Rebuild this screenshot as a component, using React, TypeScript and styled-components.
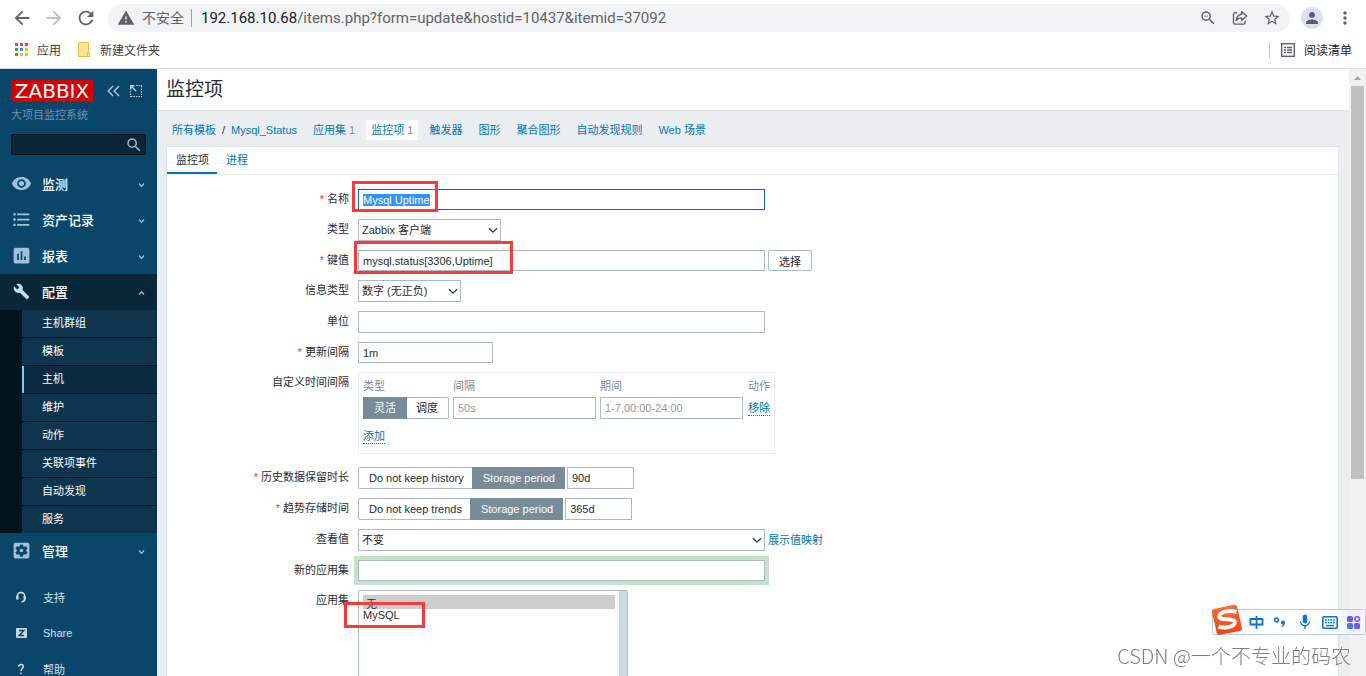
import React, { useEffect, useRef } from 'react';
import styled, { createGlobalStyle, css } from 'styled-components';
import {
  MdArrowBack, MdArrowForward, MdRefresh, MdWarning, MdZoomOut, MdStarBorder, MdMoreVert, MdPerson,
  MdVisibility, MdFormatListBulleted, MdAssessment, MdBuild, MdSettingsApplications, MdSearch, MdMic,
} from 'react-icons/md';

const c = {
  text: '#1f2c33',
  link: '#0275b8',
  border: '#acbbc2',
  soft: '#dfe4e7',
  page: '#ebeef0',
  muted: '#768d99',
  side: '#0a466a',
  sideDark: '#0a2737',
  sideIcon: '#9fc2da',
  chrome: '#5f6368',
  mark: '#fa3a3a',
};

const Global = createGlobalStyle`
  *, *::before, *::after { box-sizing: border-box; }
  body { margin: 0; overflow: hidden; background: #fff; }
  body, input, button, select {
    font-family: "Liberation Sans", "Noto Sans CJK SC", sans-serif;
    font-size: 11px;
    color: ${c.text};
  }
  a { color: ${c.link}; text-decoration: none; }
  svg { display: block; flex: none; }
`;

/* ---------- browser frame ---------- */

const Shell = styled.div`
  display: flex;
  flex-direction: column;
  height: 100vh;
  overflow: hidden;
`;

const BrowserTop = styled.header`
  flex: none;
  border-bottom: 1px solid #dadce0;
  color: ${c.chrome};
`;

const ToolRow = styled.div`
  display: flex;
  align-items: center;
  height: 36px;
  padding: 0 10px 0 6px;
`;

const IconButton = styled.button<{ $dim?: boolean; $w?: number }>`
  display: flex;
  align-items: center;
  justify-content: center;
  flex: none;
  width: ${(p) => p.$w ?? 32}px;
  height: 28px;
  padding: 0;
  border: 0;
  background: none;
  color: ${(p) => (p.$dim ? '#bdbfc2' : c.chrome)};
`;

const AddressBar = styled.div`
  display: flex;
  align-items: center;
  flex: 1;
  height: 28px;
  margin-left: 6px;
  padding: 0 2px 0 9px;
  border-radius: 14px;
  background: #f1f3f4;
`;

const Insecure = styled.span`
  display: flex;
  align-items: center;
  gap: 7px;
  padding-right: 7px;
  border-right: 1px solid #9aa0a6;
  font-size: 14px;
  line-height: 16px;
`;

const Url = styled.div`
  flex: 1;
  padding-left: 9px;
  font-family: Roboto, "Noto Sans", sans-serif;
  font-size: 15px;
  b { font-weight: 400; color: #202124; }
`;

const Avatar = styled.span`
  display: flex;
  align-items: center;
  justify-content: center;
  width: 22px;
  height: 22px;
  border-radius: 50%;
  background: #dee1e6;
  color: #4f5d75;
`;

const Bookmarks = styled.nav`
  display: flex;
  align-items: center;
  height: 32px;
  padding: 0 14px 5px 15px;
  font-size: 12px;
`;

const Bookmark = styled.a<{ $end?: boolean }>`
  display: flex;
  align-items: center;
  gap: 9px;
  height: 16px;
  margin-right: 17px;
  color: #3c4043;
  ${(p) => p.$end && css`
    margin: 0 0 0 auto;
    padding-left: 11px;
    border-left: 1px solid #c4c7cb;
    color: #202124;
  `}
`;

/* ---------- sidebar ---------- */

const Work = styled.div`
  display: flex;
  flex: 1;
  min-height: 0;
`;

const Sidebar = styled.aside`
  flex: none;
  width: 157px;
  overflow: hidden;
  background: ${c.side};
  color: #fff;
`;

const Brand = styled.div`
  display: flex;
  align-items: center;
  gap: 10px;
  padding: 11px 0 0 11px;
`;

const Logo = styled.a`
  flex: none;
  width: 82px;
  height: 22px;
  margin-right: 4px;
  background: #d40000;
  color: #fff;
  font: 20px/22px "DejaVu Sans", sans-serif;
  text-align: center;
`;

const Collapse = styled.button`
  display: flex;
  padding: 0;
  border: 0;
  background: none;
  color: #b4cddf;
`;

const Server = styled.div`
  padding: 5px 11px 0;
  line-height: 16px;
  color: #6e94ad;
`;

const SearchBox = styled.form`
  display: flex;
  align-items: center;
  height: 21px;
  margin: 11px 11px;
  padding-right: 2px;
  border: 1px solid #020d14;
  border-radius: 2px;
  background: #0a2737;
  input { flex: 1; min-width: 0; border: 0; background: none; color: #fff; outline: 0; }
  button { display: flex; padding: 0; border: 0; background: none; color: #9fb9c9; }
`;

const MenuItem = styled.a<{ $open?: boolean }>`
  display: flex;
  align-items: center;
  height: 36px;
  padding: 0 11px 2px;
  background: ${(p) => (p.$open ? c.sideDark : 'transparent')};
  color: #fff;
  font-size: 13px;
  font-weight: 500;
  > svg { margin: 3px 0 0 auto; color: #a9c4d6; }
`;

const MenuIcon = styled.span<{ $open?: boolean }>`
  display: flex;
  justify-content: center;
  width: 21px;
  margin-right: 10px;
  color: ${(p) => (p.$open ? '#c3dcee' : c.sideIcon)};
`;

const SubMenu = styled.div`
  display: grid;
  row-gap: 1px;
  padding-left: 22px;
  background: #03141d;
`;

const SubItem = styled.a<{ $on?: boolean }>`
  height: 27px;
  padding-left: 18px;
  border-left: 2px solid ${(p) => (p.$on ? '#7fc8f8' : '#0f344e')};
  background: ${(p) => (p.$on ? '#0a2b3f' : '#0f344e')};
  color: #fff;
  line-height: 26px;
`;

const Extras = styled.div`
  padding-top: 10px;
`;

const ExtraItem = styled.a`
  display: flex;
  align-items: center;
  gap: 16px;
  height: 36px;
  padding-left: 15px;
  color: #d3e2ec;
`;

/* ---------- content ---------- */

const Content = styled.main`
  display: flex;
  flex-direction: column;
  flex: 1;
  min-width: 0;
  overflow: hidden;
  background: ${c.page};
`;

const Title = styled.h1`
  flex: none;
  height: 42px;
  margin: 0;
  padding-left: 9px;
  border-bottom: 1px solid ${c.soft};
  background: #fff;
  font-size: 19px;
  font-weight: 400;
  line-height: 41px;
`;

const Crumbs = styled.nav`
  display: flex;
  align-items: center;
  flex: none;
  gap: 6px;
  height: 35px;
  padding: 2px 10px 0;
  span { color: ${c.muted}; }
`;

const Crumb = styled.a<{ $on?: boolean }>`
  height: 20px;
  padding: 0 5px;
  line-height: 20px;
  background: ${(p) => (p.$on ? '#fff' : 'transparent')};
`;

const CrumbPath = styled.div`
  display: flex;
  align-items: center;
  i { width: 5px; font-style: normal; text-align: center; }
`;

const Panel = styled.section`
  flex: 1 0 auto;
  margin: 0 10px 0 9px;
  border: 1px solid ${c.soft};
  background: #fff;
`;

const Tabs = styled.nav`
  display: flex;
  height: 28px;
  border-bottom: 1px solid ${c.page};
`;

const Tab = styled.a<{ $on?: boolean }>`
  height: 27px;
  padding: 0 8px 0 9px;
  border-bottom: ${(p) => (p.$on ? `2px solid ${c.link}` : '0')};
  color: ${(p) => (p.$on ? c.text : c.link)};
  line-height: 26px;
`;

const Form = styled.form`
  display: grid;
  row-gap: 9px;
  padding-top: 14px;
`;

const Row = styled.div<{ $gapAfter?: boolean }>`
  display: grid;
  grid-template-columns: 182px 1fr;
  column-gap: 9px;
  margin-bottom: ${(p) => (p.$gapAfter ? 4 : 0)}px;
`;

const Label = styled.label<{ $required?: boolean }>`
  text-align: right;
  line-height: 20px;
  &::before { content: ${(p) => (p.$required ? '"* "' : 'none')}; color: #e33734; }
`;

const Field = styled.div<{ $gap?: number }>`
  position: relative;
  display: flex;
  align-items: flex-start;
  gap: ${(p) => p.$gap ?? 3}px;
`;

const TextBox = styled.input<{ $w: number; $tall?: boolean; $focus?: boolean; $glow?: boolean }>`
  width: ${(p) => p.$w}px;
  height: ${(p) => (p.$tall ? 22 : 21)}px;
  padding: 0 4px;
  border: 1px solid ${(p) => (p.$focus ? '#0a6aa3' : c.border)};
  border-radius: 0;
  outline: 0;
  background: #fff;
  box-shadow: ${(p) => (p.$glow ? '0 0 0 4px #c5e3c8' : 'none')};
  &::placeholder { color: #999; opacity: 1; }
  &::selection { background: #3390ff; color: #fff; }
`;

const SelectWrap = styled.div<{ $w: number }>`
  position: relative;
  width: ${(p) => p.$w}px;
  select {
    appearance: none;
    display: block;
    width: 100%;
    height: 22px;
    padding: 0 20px 0 3px;
    border: 1px solid ${c.border};
    border-radius: 0;
    background: #fff;
  }
  svg { position: absolute; top: 8px; right: 3px; pointer-events: none; }
`;

const PlainButton = styled.button`
  width: 44px;
  height: 21px;
  padding: 0;
  border: 1px solid ${c.border};
  border-radius: 2px;
  background: #fff;
`;

const Segments = styled.div`
  display: inline-flex;
  height: 22px;
  border: 1px solid ${c.border};
  border-radius: 2px;
`;

const Segment = styled.label`
  position: relative;
  min-width: 42px;
  padding: 0 9px 0 10px;
  line-height: 20px;
  white-space: nowrap;
  &:has(input:checked) {
    min-width: 44px;
    margin: -1px;
    padding: 1px 10px 1px 11px;
    background: ${c.muted};
    color: #fff;
  }
  input { position: absolute; inset: 0; margin: 0; opacity: 0; }
`;

const IntervalBox = styled.div`
  width: 417px;
  padding: 3px 4px 0;
  border: 1px solid ${c.page};
`;

const IntervalTable = styled.table`
  border-collapse: collapse;
  table-layout: fixed;
  width: 100%;
  th { height: 18px; padding: 0; color: ${c.muted}; font-weight: 400; text-align: left; }
  td { padding: 3px 0 0; vertical-align: middle; height: 25px; }
  tfoot td { height: 34px; padding: 0; }
`;

const DottedButton = styled.button`
  padding: 0;
  border: 0;
  border-bottom: 1px dotted ${c.link};
  background: none;
  color: ${c.link};
  line-height: 14px;
`;

const SideLink = styled.a`
  line-height: 22px;
`;

const ListFrame = styled.div`
  display: flex;
  width: 270px;
  height: 102px;
  border: 1px solid ${c.border};
  border-radius: 2px;
  select {
    flex: 1;
    height: 100%;
    padding: 4px;
    border: 0;
    outline: 0;
    overflow: hidden;
    background: #fff;
  }
  option { height: 14px; min-height: 14px; padding: 0; line-height: 14px; color: ${c.text}; }
`;

const ListTrack = styled.div`
  width: 8px;
  background: #d0d9de;
`;

/* Hand-drawn highlight frames laid over the fields */
const Mark = styled.span<{ $x: number; $y: number; $w: number; $h: number }>`
  position: absolute;
  left: ${(p) => p.$x}px;
  top: ${(p) => p.$y}px;
  width: ${(p) => p.$w}px;
  height: ${(p) => p.$h}px;
  border: 3px solid ${c.mark};
  pointer-events: none;
`;

const ScrollBar = styled.div`
  display: flex;
  flex-direction: column;
  align-items: center;
  flex: none;
  width: 17px;
  background: #f1f1f1;
  svg { margin: 6px 0; }
  &::after { content: ''; flex: 1; }
`;

const Thumb = styled.div`
  flex: 2;
  width: 13px;
  background: #c1c1c1;
`;

/* ---------- overlays ---------- */

const ImeBar = styled.div`
  position: fixed;
  right: 0;
  bottom: 41px;
  display: flex;
  align-items: center;
  gap: 8px;
  height: 26px;
  padding: 0 4px 0 36px;
  border: 1px solid #b4cde8;
  border-radius: 2px;
  background: linear-gradient(to right, #fff 84%, #e2f8fb 88%, #f8e6f6 96%, #fff);
  color: #0a6fd8;
  > svg:first-child { position: absolute; left: -2px; top: -6px; }
`;

const Watermark = styled.div`
  position: fixed;
  right: 15px;
  bottom: 5px;
  font: 300 20px/30px "Noto Sans CJK SC", sans-serif;
  color: #808080;
  text-shadow: -1px -1px 0 #fff;
  white-space: nowrap;
`;

/* ---------- drawings ---------- */

const AppsIcon = () => (
  <svg width="13" height="13" viewBox="0 0 13 13">
    {['#ea4335', '#ea4335', '#ea4335', '#34a853', '#4285f4', '#fbbc05', '#34a853', '#fbbc05', '#fbbc05'].map((f, i) => (
      <rect key={i} x={(i % 3) * 5} y={Math.floor(i / 3) * 5} width="3" height="3" fill={f} />
    ))}
  </svg>
);

const FolderIcon = () => (
  <svg width="13" height="15" viewBox="0 0 13 15">
    <path d="M.5.5h10v10h1v4H.5z" fill="#ffe694" stroke="#e8c14d" />
    <path d="M9.5 10.5h2v4h-2z" fill="#ffe694" stroke="#e8c14d" />
  </svg>
);

const ShareIcon = () => (
  <svg width="16" height="16" viewBox="0 0 16 16" fill="none" stroke="currentColor" strokeWidth="1.4" strokeLinejoin="round">
    <path d="M5 2.7H3.2A1.7 1.7 0 0 0 1.500 4.400v8A1.700 1.700 0 0 0 3.200 14.100h8.300a1.700 1.700 0 0 0 1.700-1.700V11" />
    <path d="M9.600 1.600 14.600 6 9.600 10.400V7.900C7 7.900 5.400 8.700 4.200 10.500 4.600 7.400 6.300 4.700 9.600 4.200z" />
  </svg>
);

const ReadingIcon = () => (
  <svg width="14" height="14" viewBox="0 0 14 14" fill="none" stroke={c.chrome}>
    <rect x="0.700" y="0.700" width="12.600" height="12.600" strokeWidth="1.400" />
    <path d="M3 4.500h2M6 4.500h5M3 7h2M6 7h5M3 9.500h2M6 9.500h5" strokeWidth="1.300" />
  </svg>
);

const CollapseIcon = () => (
  <svg width="13" height="12" viewBox="0 0 13 12" fill="none" stroke="currentColor" strokeWidth="1.300">
    <path d="M6 1 1.200 6 6 11M12 1 7.200 6 12 11" />
  </svg>
);

const KioskIcon = () => (
  <svg width="12" height="12" viewBox="0 0 12 12" fill="none" stroke="currentColor">
    <path d="M6 .5h6M11.500 1v11M.5 6v6M1 11.500h11" strokeDasharray="1.500 1" />
    <path d="M1 1l5 5M.7 4.500V.7h3.800" strokeWidth="1.400" />
  </svg>
);

const Caret = ({ up }: { up?: boolean }) => (
  <svg width="9" height="6" viewBox="0 0 9 6" fill="none" stroke="currentColor" strokeWidth="1.200">
    <path d={up ? 'M2 4.500 4.500 1.800 7 4.500' : 'M2 1.500 4.500 4.300 7 1.500'} />
  </svg>
);

const SelectArrow = () => (
  <svg width="10" height="7" viewBox="0 0 10 7" fill="none" stroke="#333" strokeWidth="1.300">
    <path d="M1 1.200 5 5.200 9 1.200" />
  </svg>
);

const SupportIcon = () => (
  <svg width="12" height="12" viewBox="0 0 12 12" fill="none" stroke="currentColor" strokeWidth="1.500">
    <path d="M2.300 8V5.200A3.700 3.700 0 0 1 9.700 5.200V8.500Q9.700 10.500 6.500 10.700" />
    <path d="M2.400 5v3.500M9.600 5v3.500" strokeWidth="2.200" />
  </svg>
);

const ShareZIcon = () => (
  <svg width="12" height="10" viewBox="0 0 12 10">
    <rect x="1" width="11" height="10" rx="1" fill="#c6d7e3" />
    <path d="M4 2.500h4.800L4.300 7.500H9" fill="none" stroke={c.side} strokeWidth="1.500" />
  </svg>
);

const HelpIcon = () => (
  <svg width="12" height="12" viewBox="0 0 12 12" fill="none" stroke="currentColor" strokeWidth="1.500">
    <path d="M3.700 3.700Q3.800 1.500 6 1.500T8.300 3.600C8.300 5.200 6 5.300 6 8M6 9.500v1.500" />
  </svg>
);

const SogouIcon = () => (
  <svg width="32" height="31" viewBox="0 0 32 31">
    <defs>
      <linearGradient id="sogou" x1="0" y1="0" x2="0" y2="1">
        <stop offset="0" stopColor="#ff6f37" />
        <stop offset="1" stopColor="#ee4310" />
      </linearGradient>
    </defs>
    <path d="M3 5 23 .7q2.500-.4 3.200 2L31 24q.4 2.400-2 3L8.500 30.700q-2.200.3-2.800-2L1 8.500Q.7 5.600 3 5z" fill="url(#sogou)" />
    <path d="M25.500 8C19 6 8 7.500 8.300 12.700 8.500 17 23.500 13.500 23.800 18.200 24 23.200 13 24.500 7.500 22.500" fill="none" stroke="#fff" strokeWidth="4" />
  </svg>
);

const PunctIcon = () => (
  <svg width="16" height="14" viewBox="0 0 16 14">
    <circle cx="4.500" cy="5" r="1.900" fill="none" stroke="currentColor" strokeWidth="1.500" />
    <path d="M9 7.500a2 2 0 1 1 3.800 1Q12.300 11 9.800 12.300L9.500 11.600Q10.800 10.800 10.800 9.600 9.300 9.300 9 7.500z" fill="currentColor" />
  </svg>
);

const ZhongIcon = () => (
  <svg width="15" height="15" viewBox="0 0 15 15" fill="none" stroke="currentColor" strokeWidth="1.800">
    <path d="M1.500 4h12v5.500h-12zM7.500 1v13" />
  </svg>
);

const KeyboardIcon = () => (
  <svg width="16" height="13" viewBox="0 0 16 13">
    <rect x="0.800" y="0.800" width="14.400" height="11.400" rx="1" fill="none" stroke="currentColor" strokeWidth="1.600" />
    <path d="M3 4h10M3 6.700h10" stroke="currentColor" strokeWidth="1.700" strokeDasharray="1.700 1" />
    <path d="M4 9.600h8" stroke="currentColor" strokeWidth="1.400" />
  </svg>
);

const GridIcon = () => (
  <svg width="15" height="15" viewBox="0 0 15 15">
    <rect x="1" y="1" width="6" height="6" rx="1.500" fill="#8358d8" />
    <circle cx="11.200" cy="4" r="2.300" fill="none" stroke="#5b6cf0" strokeWidth="1.600" />
    <rect x="1" y="8" width="6" height="6" rx="1.500" fill="#5b6cf0" />
    <rect x="8" y="8" width="6" height="6" rx="1.500" fill="#6a5fe0" />
  </svg>
);

/* ---------- page ---------- */

const subItems = ['主机群组', '模板', '主机', '维护', '动作', '关联项事件', '自动发现', '服务'];

const SelectBox = ({ id, w, value }: { id: string; w: number; value: string }) => (
  <SelectWrap $w={w}>
    <select id={id} defaultValue={value}><option>{value}</option></select>
    <SelectArrow />
  </SelectWrap>
);

const Choice = ({ name, options, active }: { name: string; options: string[]; active: number }) => (
  <Segments role="radiogroup">
    {options.map((o, i) => (
      <Segment key={o}>
        <input type="radio" name={name} defaultChecked={i === active} />
        {o}
      </Segment>
    ))}
  </Segments>
);

export default function App() {
  const nameRef = useRef<HTMLInputElement>(null);
  useEffect(() => {
    nameRef.current?.focus();
    nameRef.current?.select();
  }, []);

  return (
    <Shell>
      <Global />
      <BrowserTop>
        <ToolRow>
          <IconButton aria-label="后退"><MdArrowBack size={22} /></IconButton>
          <IconButton aria-label="前进" $dim><MdArrowForward size={22} /></IconButton>
          <IconButton aria-label="刷新"><MdRefresh size={22} /></IconButton>
          <AddressBar>
            <Insecure><MdWarning size={18} />不安全</Insecure>
            <Url><b>192.168.10.68</b>/items.php?form=update&amp;hostid=10437&amp;itemid=37092</Url>
            <IconButton aria-label="缩放"><MdZoomOut size={18} /></IconButton>
            <IconButton aria-label="分享"><ShareIcon /></IconButton>
            <IconButton aria-label="收藏"><MdStarBorder size={18} /></IconButton>
          </AddressBar>
          <IconButton aria-label="用户" $w={44}><Avatar><MdPerson size={18} /></Avatar></IconButton>
          <IconButton aria-label="菜单" $w={22}><MdMoreVert size={20} /></IconButton>
        </ToolRow>
        <Bookmarks>
          <Bookmark href="#"><AppsIcon />应用</Bookmark>
          <Bookmark href="#"><FolderIcon />新建文件夹</Bookmark>
          <Bookmark href="#" $end><ReadingIcon />阅读清单</Bookmark>
        </Bookmarks>
      </BrowserTop>

      <Work>
        <Sidebar>
          <Brand>
            <Logo href="#">ZABBIX</Logo>
            <Collapse aria-label="收起"><CollapseIcon /></Collapse>
            <Collapse aria-label="全屏"><KioskIcon /></Collapse>
          </Brand>
          <Server>大项目监控系统</Server>
          <SearchBox>
            <input aria-label="搜索" />
            <button type="button" aria-label="搜索"><MdSearch size={18} /></button>
          </SearchBox>
          <MenuItem href="#"><MenuIcon><MdVisibility size={21} /></MenuIcon>监测<Caret /></MenuItem>
          <MenuItem href="#"><MenuIcon><MdFormatListBulleted size={21} /></MenuIcon>资产记录<Caret /></MenuItem>
          <MenuItem href="#"><MenuIcon><MdAssessment size={21} /></MenuIcon>报表<Caret /></MenuItem>
          <MenuItem href="#" $open><MenuIcon $open><MdBuild size={17} /></MenuIcon>配置<Caret up /></MenuItem>
          <SubMenu>
            {subItems.map((s) => <SubItem key={s} href="#" $on={s === '主机'}>{s}</SubItem>)}
          </SubMenu>
          <MenuItem href="#"><MenuIcon><MdSettingsApplications size={21} /></MenuIcon>管理<Caret /></MenuItem>
          <Extras>
            <ExtraItem href="#"><SupportIcon />支持</ExtraItem>
            <ExtraItem href="#"><ShareZIcon />Share</ExtraItem>
            <ExtraItem href="#"><HelpIcon />帮助</ExtraItem>
          </Extras>
        </Sidebar>

        <Content>
          <Title>监控项</Title>
          <Crumbs>
            <CrumbPath>
              <Crumb href="#">所有模板</Crumb><i>/</i><Crumb href="#">Mysql_Status</Crumb>
            </CrumbPath>
            <Crumb href="#">应用集 <span>1</span></Crumb>
            <Crumb href="#" $on>监控项 <span>1</span></Crumb>
            <Crumb href="#">触发器</Crumb>
            <Crumb href="#">图形</Crumb>
            <Crumb href="#">聚合图形</Crumb>
            <Crumb href="#">自动发现规则</Crumb>
            <Crumb href="#">Web 场景</Crumb>
          </Crumbs>
          <Panel>
            <Tabs>
              <Tab href="#" $on>监控项</Tab>
              <Tab href="#">进程</Tab>
            </Tabs>
            <Form>
              <Row>
                <Label htmlFor="name" $required>名称</Label>
                <Field>
                  <TextBox id="name" ref={nameRef} $w={407} $focus defaultValue="Mysql Uptime" />
                  <Mark $x={-6} $y={-8} $w={86} $h={31} />
                </Field>
              </Row>
              <Row>
                <Label htmlFor="type">类型</Label>
                <Field><SelectBox id="type" w={143} value="Zabbix 客户端" /></Field>
              </Row>
              <Row>
                <Label htmlFor="key" $required>键值</Label>
                <Field>
                  <TextBox id="key" $w={407} defaultValue="mysql.status[3306,Uptime]" />
                  <PlainButton type="button">选择</PlainButton>
                  <Mark $x={-4} $y={-9} $w={159} $h={33} />
                </Field>
              </Row>
              <Row>
                <Label htmlFor="info">信息类型</Label>
                <Field><SelectBox id="info" w={103} value="数字 (无正负)" /></Field>
              </Row>
              <Row>
                <Label htmlFor="units">单位</Label>
                <Field><TextBox id="units" $w={407} $tall /></Field>
              </Row>
              <Row>
                <Label htmlFor="delay" $required>更新间隔</Label>
                <Field><TextBox id="delay" $w={135} defaultValue="1m" /></Field>
              </Row>
              <Row $gapAfter>
                <Label as="span">自定义时间间隔</Label>
                <IntervalBox>
                  <IntervalTable>
                    <colgroup><col width="90" /><col width="147" /><col width="148" /><col /></colgroup>
                    <thead><tr><th>类型</th><th>间隔</th><th>期间</th><th>动作</th></tr></thead>
                    <tbody>
                      <tr>
                        <td><Field><Choice name="flex" options={['灵活', '调度']} active={0} /></Field></td>
                        <td><Field><TextBox aria-label="间隔" $w={143} $tall placeholder="50s" /></Field></td>
                        <td><Field><TextBox aria-label="期间" $w={143} $tall placeholder="1-7,00:00-24:00" /></Field></td>
                        <td><DottedButton type="button">移除</DottedButton></td>
                      </tr>
                    </tbody>
                    <tfoot><tr><td colSpan={4}><DottedButton type="button">添加</DottedButton></td></tr></tfoot>
                  </IntervalTable>
                </IntervalBox>
              </Row>
              <Row>
                <Label htmlFor="history" $required>历史数据保留时长</Label>
                <Field $gap={2}>
                  <Choice name="history_mode" options={['Do not keep history', 'Storage period']} active={1} />
                  <TextBox id="history" $w={67} $tall defaultValue="90d" />
                </Field>
              </Row>
              <Row>
                <Label htmlFor="trends" $required>趋势存储时间</Label>
                <Field $gap={2}>
                  <Choice name="trends_mode" options={['Do not keep trends', 'Storage period']} active={1} />
                  <TextBox id="trends" $w={67} $tall defaultValue="365d" />
                </Field>
              </Row>
              <Row>
                <Label htmlFor="valuemap">查看值</Label>
                <Field><SelectBox id="valuemap" w={407} value="不变" /><SideLink href="#">展示值映射</SideLink></Field>
              </Row>
              <Row>
                <Label htmlFor="newapp">新的应用集</Label>
                <Field><TextBox id="newapp" $w={407} $glow /></Field>
              </Row>
              <Row>
                <Label htmlFor="apps">应用集</Label>
                <Field>
                  <ListFrame>
                    <select id="apps" multiple size={6} defaultValue={['0']}>
                      <option value="0">&nbsp;无</option>
                      <option value="1">MySQL</option>
                    </select>
                    <ListTrack />
                  </ListFrame>
                  <Mark $x={-14} $y={12} $w={81} $h={26} />
                </Field>
              </Row>
            </Form>
          </Panel>
        </Content>

        <ScrollBar>
          <svg width="7" height="5" viewBox="0 0 7 5"><path d="M0 5 3.500 1 7 5z" fill="#a3a3a3" /></svg>
          <Thumb />
        </ScrollBar>
      </Work>

      <ImeBar>
        <SogouIcon />
        <ZhongIcon />
        <PunctIcon />
        <MdMic size={18} />
        <KeyboardIcon />
        <GridIcon />
      </ImeBar>
      <Watermark>CSDN @一个不专业的码农</Watermark>
    </Shell>
  );
}
